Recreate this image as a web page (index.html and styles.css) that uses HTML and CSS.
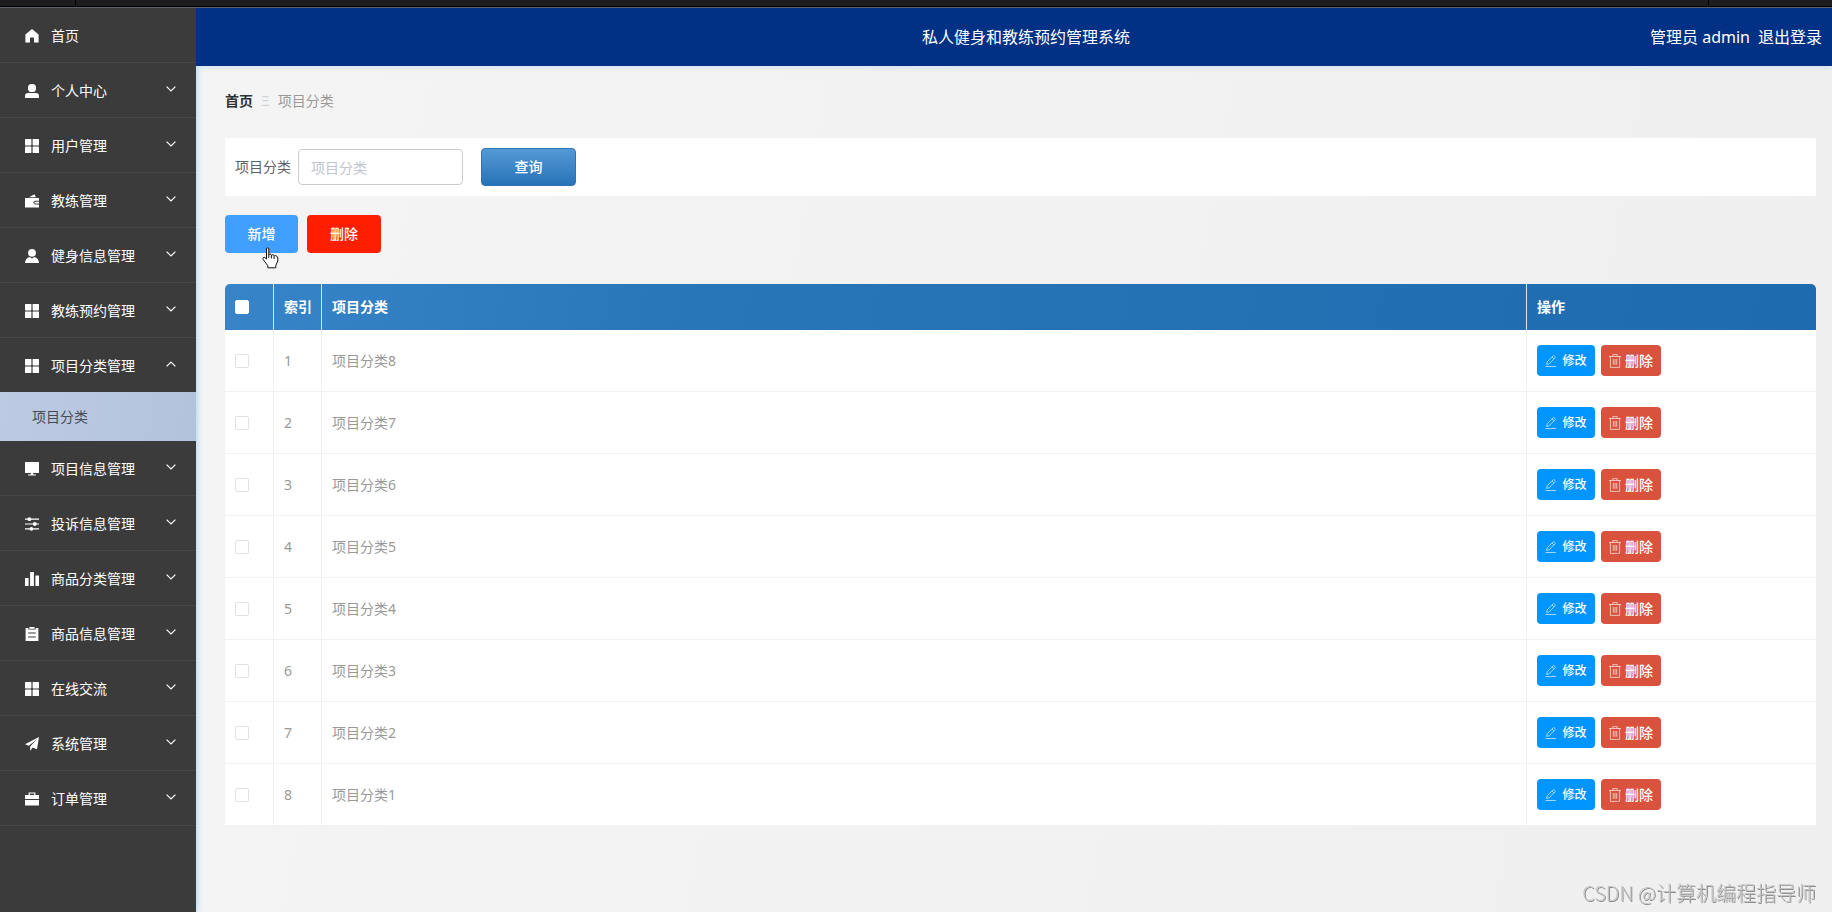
FILE: index.html
```html
<!DOCTYPE html>
<html lang="zh-CN">

<head>
    <meta charset="UTF-8">
    <meta name="viewport" content="width=device-width, initial-scale=1.0">
    <title>私人健身和教练预约管理系统</title>
    <link rel="stylesheet" href="styles.css">
</head>

<body>
    <!-- icon set -->
    <svg class="sprite" xmlns="http://www.w3.org/2000/svg" aria-hidden="true">
        <symbol id="i-home" viewBox="0 0 14 14">
            <path d="M7 0 13.6 5.6V13.5H9V9.2Q9 8.4 8.2 8.4H5.8Q5 8.4 5 9.2V13.5H.4V5.6Z" />
        </symbol>
        <symbol id="i-user" viewBox="0 0 14 14">
            <rect x="3" y="0" width="8" height="8" rx="3.6" />
            <path d="M0 14V12.2Q0 9 3.2 9H10.8Q14 9 14 12.2V14Z" />
        </symbol>
        <symbol id="i-grid" viewBox="0 0 14 14">
            <rect width="6.4" height="6.4" rx=".6" />
            <rect x="7.6" width="6.4" height="6.4" rx=".6" />
            <rect y="7.6" width="6.4" height="6.4" rx=".6" />
            <rect x="7.6" y="7.6" width="6.4" height="6.4" rx=".6" />
        </symbol>
        <symbol id="i-wallet" viewBox="0 0 14 14">
            <path d="M4 3.2 9 .6Q9.6.3 9.9.9L11 3.2Z" />
            <path fill-rule="evenodd" d="M0 4H14V6.8H10.2A1.8 1.8 0 0 0 10.2 10.4H14V13.6H0ZM10.3 7.8H14V9.5H10.3A.85.85 0 0 1 10.3 7.8Z" />
        </symbol>
        <symbol id="i-coach" viewBox="0 0 14 14">
            <circle cx="7" cy="3.9" r="3.9" />
            <path d="M0 14Q.4 8.8 4.6 7.9L7 9.6 9.4 7.9Q13.6 8.8 14 14Z" />
        </symbol>
        <symbol id="i-screen" viewBox="0 0 14 14">
            <path d="M.6 0H13.4Q14 0 14 .6V10.4Q14 11 13.4 11H.6Q0 11 0 10.4V.6Q0 0 .6 0ZM5.8 11H8.2V12.4H11V13.6H3V12.4H5.8Z" />
        </symbol>
        <symbol id="i-sliders" viewBox="0 0 14 14">
            <path d="M0 1.6H14V2.8H0ZM0 6.4H14V7.6H0ZM0 11.2H14V12.4H0Z" />
            <circle cx="4.4" cy="2.2" r="1.9" />
            <circle cx="9.8" cy="7" r="1.9" />
            <circle cx="6.4" cy="11.8" r="1.9" />
        </symbol>
        <symbol id="i-chart" viewBox="0 0 14 14">
            <path d="M0 6H3.6V14H0ZM5.1 0H8.9V14H5.1ZM10.4 3.4H14V14H10.4Z" />
        </symbol>
        <symbol id="i-clipboard" viewBox="0 0 14 14">
            <path fill-rule="evenodd" d="M.6 1H3.4V2.6H10.6V1H13.4V14H.6ZM3.2 5.4V6.4H10.8V5.4ZM3.2 9.6V10.6H10.8V9.6Z" />
            <path d="M4.4 0H9.6V1.8H4.4Z" />
        </symbol>
        <symbol id="i-plane" viewBox="0 0 14 14">
            <path d="M14 0 12 12.2 7.6 10.4 5.2 14V9.4L11.6 2.6 3.8 8.8 0 7.2Z" />
        </symbol>
        <symbol id="i-case" viewBox="0 0 14 14">
            <path fill-rule="evenodd" d="M0 3H3.6V.4H10.4V3H14V7H0ZM4.8 1.5V3H9.2V1.5ZM0 8H14V13.6H0Z" />
        </symbol>
        <symbol id="i-arrow" viewBox="0 0 10 6">
            <path d="M.6.6 5 5 9.4.6" fill="none" stroke="currentColor" stroke-width="1.2" />
        </symbol>
        <symbol id="i-edit" viewBox="0 0 12 12">
            <path d="M.5 11.5H11M1.6 9.4 2.2 6.8 8 .9Q8.6.4 9.2.9L10 1.7Q10.5 2.3 10 2.9L4.2 8.8ZM7 2 8.9 3.9" fill="none" stroke="currentColor" stroke-width=".8" />
        </symbol>
        <symbol id="i-trash" viewBox="0 0 12 14">
            <path d="M0 2.5H12M3.8 2.5V.6H8.2V2.5M1.4 2.5V13.4H10.6V2.5M4.3 5V10.8M6 5V10.8M7.7 5V10.8" fill="none" stroke="currentColor" stroke-width=".8" />
        </symbol>
    </svg>

    <div class="strip">
        <span class="strip-tab"></span>
        <span class="strip-end"></span>
    </div>

    <div class="app">
        <nav class="sidebar">
            <a class="menu-item" href="#"><svg class="menu-icon"><use href="#i-home" /></svg>首页</a>
            <button class="menu-item" type="button" aria-expanded="false"><svg class="menu-icon"><use href="#i-user" /></svg>个人中心<svg class="menu-arrow"><use href="#i-arrow" /></svg></button>
            <button class="menu-item" type="button" aria-expanded="false"><svg class="menu-icon"><use href="#i-grid" /></svg>用户管理<svg class="menu-arrow"><use href="#i-arrow" /></svg></button>
            <button class="menu-item" type="button" aria-expanded="false"><svg class="menu-icon"><use href="#i-wallet" /></svg>教练管理<svg class="menu-arrow"><use href="#i-arrow" /></svg></button>
            <button class="menu-item" type="button" aria-expanded="false"><svg class="menu-icon"><use href="#i-coach" /></svg>健身信息管理<svg class="menu-arrow"><use href="#i-arrow" /></svg></button>
            <button class="menu-item" type="button" aria-expanded="false"><svg class="menu-icon"><use href="#i-grid" /></svg>教练预约管理<svg class="menu-arrow"><use href="#i-arrow" /></svg></button>
            <button class="menu-item menu-item--open" type="button" aria-expanded="true"><svg class="menu-icon"><use href="#i-grid" /></svg>项目分类管理<svg class="menu-arrow"><use href="#i-arrow" /></svg></button>
            <a class="submenu-item" href="#">项目分类</a>
            <button class="menu-item" type="button" aria-expanded="false"><svg class="menu-icon"><use href="#i-screen" /></svg>项目信息管理<svg class="menu-arrow"><use href="#i-arrow" /></svg></button>
            <button class="menu-item" type="button" aria-expanded="false"><svg class="menu-icon"><use href="#i-sliders" /></svg>投诉信息管理<svg class="menu-arrow"><use href="#i-arrow" /></svg></button>
            <button class="menu-item" type="button" aria-expanded="false"><svg class="menu-icon"><use href="#i-chart" /></svg>商品分类管理<svg class="menu-arrow"><use href="#i-arrow" /></svg></button>
            <button class="menu-item" type="button" aria-expanded="false"><svg class="menu-icon"><use href="#i-clipboard" /></svg>商品信息管理<svg class="menu-arrow"><use href="#i-arrow" /></svg></button>
            <button class="menu-item" type="button" aria-expanded="false"><svg class="menu-icon"><use href="#i-grid" /></svg>在线交流<svg class="menu-arrow"><use href="#i-arrow" /></svg></button>
            <button class="menu-item" type="button" aria-expanded="false"><svg class="menu-icon"><use href="#i-plane" /></svg>系统管理<svg class="menu-arrow"><use href="#i-arrow" /></svg></button>
            <button class="menu-item" type="button" aria-expanded="false"><svg class="menu-icon"><use href="#i-case" /></svg>订单管理<svg class="menu-arrow"><use href="#i-arrow" /></svg></button>
        </nav>

        <div class="page">
            <header class="header">
                <h1 class="header-title">私人健身和教练预约管理系统</h1>
                <div class="header-user">
                    <span>管理员 admin</span>
                    <a class="header-link" href="#">退出登录</a>
                </div>
            </header>

            <main class="content">
                <div class="breadcrumb">
                    <a class="breadcrumb-home" href="#">首页</a>
                    <span class="breadcrumb-sep">Ξ</span>
                    <span>项目分类</span>
                </div>

                <form class="search">
                    <label class="search-label" for="category">项目分类</label>
                    <input class="search-input" id="category" type="text" placeholder="项目分类">
                    <button class="btn btn--search" type="button">查询</button>
                </form>

                <div class="actions">
                    <button class="btn btn--add" type="button">新增
                        <svg class="cursor" viewBox="0 0 17 22" aria-hidden="true">
                            <path d="M4.5 2Q4.5.8 5.6.8T6.8 2V8Q7.2 6.8 8.2 7T9.4 8.4Q10 7.4 11 7.7T12.1 9.2Q12.6 8.3 13.5 8.6 15.6 9 15.8 11V14L13.8 18.4V20.8H5.8V18.8L1.2 12.4Q.6 11 1.6 10.4T4.5 12Z" fill="#fff" stroke="#111" />
                            <path d="M6.8 8V11M9.4 8.4V11.4M12.1 9.2V12" stroke="#111" />
                        </svg>
                    </button>
                    <button class="btn btn--remove" type="button">删除</button>
                </div>

                <table class="table">
                    <thead>
                        <tr>
                            <th class="col-check"><input class="check" type="checkbox" aria-label="全选"></th>
                            <th class="col-index">索引</th>
                            <th>项目分类</th>
                            <th class="col-ops">操作</th>
                        </tr>
                    </thead>
                    <tbody>
                        <tr>
                            <td><input class="check" type="checkbox" aria-label="选择项目分类8"></td>
                            <td>1</td>
                            <td>项目分类8</td>
                            <td>
                                <div class="ops">
                                    <button class="op op--edit" type="button"><svg class="op-icon"><use href="#i-edit" /></svg>修改</button>
                                    <button class="op op--delete" type="button"><svg class="op-icon"><use href="#i-trash" /></svg>删除</button>
                                </div>
                            </td>
                        </tr>
                        <tr>
                            <td><input class="check" type="checkbox" aria-label="选择项目分类7"></td>
                            <td>2</td>
                            <td>项目分类7</td>
                            <td>
                                <div class="ops">
                                    <button class="op op--edit" type="button"><svg class="op-icon"><use href="#i-edit" /></svg>修改</button>
                                    <button class="op op--delete" type="button"><svg class="op-icon"><use href="#i-trash" /></svg>删除</button>
                                </div>
                            </td>
                        </tr>
                        <tr>
                            <td><input class="check" type="checkbox" aria-label="选择项目分类6"></td>
                            <td>3</td>
                            <td>项目分类6</td>
                            <td>
                                <div class="ops">
                                    <button class="op op--edit" type="button"><svg class="op-icon"><use href="#i-edit" /></svg>修改</button>
                                    <button class="op op--delete" type="button"><svg class="op-icon"><use href="#i-trash" /></svg>删除</button>
                                </div>
                            </td>
                        </tr>
                        <tr>
                            <td><input class="check" type="checkbox" aria-label="选择项目分类5"></td>
                            <td>4</td>
                            <td>项目分类5</td>
                            <td>
                                <div class="ops">
                                    <button class="op op--edit" type="button"><svg class="op-icon"><use href="#i-edit" /></svg>修改</button>
                                    <button class="op op--delete" type="button"><svg class="op-icon"><use href="#i-trash" /></svg>删除</button>
                                </div>
                            </td>
                        </tr>
                        <tr>
                            <td><input class="check" type="checkbox" aria-label="选择项目分类4"></td>
                            <td>5</td>
                            <td>项目分类4</td>
                            <td>
                                <div class="ops">
                                    <button class="op op--edit" type="button"><svg class="op-icon"><use href="#i-edit" /></svg>修改</button>
                                    <button class="op op--delete" type="button"><svg class="op-icon"><use href="#i-trash" /></svg>删除</button>
                                </div>
                            </td>
                        </tr>
                        <tr>
                            <td><input class="check" type="checkbox" aria-label="选择项目分类3"></td>
                            <td>6</td>
                            <td>项目分类3</td>
                            <td>
                                <div class="ops">
                                    <button class="op op--edit" type="button"><svg class="op-icon"><use href="#i-edit" /></svg>修改</button>
                                    <button class="op op--delete" type="button"><svg class="op-icon"><use href="#i-trash" /></svg>删除</button>
                                </div>
                            </td>
                        </tr>
                        <tr>
                            <td><input class="check" type="checkbox" aria-label="选择项目分类2"></td>
                            <td>7</td>
                            <td>项目分类2</td>
                            <td>
                                <div class="ops">
                                    <button class="op op--edit" type="button"><svg class="op-icon"><use href="#i-edit" /></svg>修改</button>
                                    <button class="op op--delete" type="button"><svg class="op-icon"><use href="#i-trash" /></svg>删除</button>
                                </div>
                            </td>
                        </tr>
                        <tr>
                            <td><input class="check" type="checkbox" aria-label="选择项目分类1"></td>
                            <td>8</td>
                            <td>项目分类1</td>
                            <td>
                                <div class="ops">
                                    <button class="op op--edit" type="button"><svg class="op-icon"><use href="#i-edit" /></svg>修改</button>
                                    <button class="op op--delete" type="button"><svg class="op-icon"><use href="#i-trash" /></svg>删除</button>
                                </div>
                            </td>
                        </tr>
                    </tbody>
                </table>
            </main>
        </div>
    </div>

    <div class="watermark">CSDN @计算机编程指导师</div>
</body>

</html>
```

FILE: styles.css
```css
/*
MAIN COLOR: #003185
SIDEBAR: #3b3b3b
FONT SIZES (px): 12 / 14 / 16 / 20
*/

* {
    margin: 0;
    padding: 0;
    box-sizing: border-box;
}

body {
    min-height: 100vh;
    display: flex;
    flex-direction: column;
    font-family: "Noto Sans", "Noto Sans CJK SC", sans-serif;
    font-size: 14px;
    line-height: 20px;
    color: #999;
    background-color: #f2f2f2;
}

button,
input {
    font: inherit;
}

button {
    border: none;
    cursor: pointer;
}

a {
    color: inherit;
    text-decoration: none;
}

svg {
    fill: currentColor;
}

.sprite {
    position: absolute;
    width: 0;
    height: 0;
}

/* window edge above the page */
.strip {
    height: 8px;
    display: flex;
    justify-content: space-between;
    background-color: #1d1d1d;
    border-bottom: 1px solid #5a6068;
    box-shadow: inset 0 -1px #000;
}

.strip-tab {
    width: 76px;
    border-right: 1px solid #000;
}

.strip-end {
    width: 124px;
    border-left: 1px solid #000;
}

.app {
    flex: 1;
    display: flex;
}

/* sidebar */
.sidebar {
    width: 196px;
    flex-shrink: 0;
    position: relative;
    z-index: 1;
    background-color: #3b3b3b;
    box-shadow: 1px 0 6px #a8d4f5;
    clip-path: inset(0 -12px 0 0);
}

.menu-item {
    width: 100%;
    height: 55px;
    padding: 2px 20px 0 25px;
    display: flex;
    align-items: center;
    color: #fff;
    background: none;
    border-bottom: 1px solid #474747;
    text-align: left;
}

.menu-item--open {
    height: 54px;
    border-bottom: none;
}

.menu-icon {
    width: 14px;
    height: 14px;
    margin-right: 12px;
}

.menu-arrow {
    width: 10px;
    height: 6px;
    margin: 0 0 4px auto;
}

.menu-item--open .menu-arrow {
    transform: rotate(180deg);
}

.submenu-item {
    height: 49px;
    padding-left: 32px;
    display: flex;
    align-items: center;
    color: #444b57;
    background: linear-gradient(100deg, #bccbe2, #b3c3dc);
}

/* header */
.page {
    flex: 1;
    min-width: 0;
    background: linear-gradient(100deg, #f4f4f4, #efefef);
}

.header {
    height: 58px;
    padding: 0 10px 0 34px;
    position: relative;
    z-index: 2;
    display: grid;
    grid-template-columns: 1fr auto 1fr;
    align-items: center;
    font-size: 16px;
    color: #fff;
    background-color: #003185;
    box-shadow: 0 1px 6px #c9dff0;
    clip-path: inset(0 0 -10px 0);
}

.header-title {
    grid-column: 2;
    font-size: 16px;
    font-weight: 400;
}

.header-user {
    display: flex;
    justify-content: flex-end;
    gap: 8px;
}

/* content */
.content {
    padding: 25px 16px 24px 29px;
}

.breadcrumb {
    display: flex;
    gap: 8px;
}

.breadcrumb-home {
    font-weight: 700;
    color: #303133;
}

.breadcrumb-sep {
    color: #d0d3d8;
}

.search {
    margin-top: 27px;
    padding: 10px;
    display: flex;
    align-items: center;
    background-color: #fff;
    border-radius: 2px;
}

.search-label {
    margin-right: 7px;
    color: #606266;
}

.search-input {
    width: 165px;
    height: 36px;
    margin-right: 18px;
    padding: 0 12px;
    border: 1px solid #ccc;
    border-radius: 4px;
    outline: none;
    color: #606266;
    background-color: #fff;
}

.search-input::placeholder {
    color: #c0c4cc;
}

.btn {
    height: 38px;
    border-radius: 4px;
    font-weight: 500;
    color: #fff;
}

.btn--search {
    width: 95px;
    border: 1px solid #2e74b5;
    background: linear-gradient(#5499d6, #2873b8);
}

.actions {
    margin: 19px 0 31px;
    display: flex;
    gap: 9px;
}

.btn--add {
    width: 73px;
    position: relative;
    background-color: #409eff;
}

.btn--remove {
    width: 74px;
    background-color: #ff1f00;
}

/* hand pointer over the add button */
.cursor {
    position: absolute;
    left: 37px;
    top: 32px;
    z-index: 1;
    width: 17px;
    height: 22px;
    fill: none;
}

/* table */
.table {
    width: 100%;
    table-layout: fixed;
    border-spacing: 0;
    border-radius: 5px 5px 0 0;
    overflow: hidden;
    background-color: #fff;
}

.table th,
.table td {
    padding: 0 10px;
    text-align: left;
    border-right: 1px solid #f2f2f2;
}

.table th:last-child,
.table td:last-child {
    border-right: none;
}

.table thead tr {
    background: linear-gradient(100deg, #3785c8, #2875b7 30%, #1f6bb0);
}

.table th {
    height: 46px;
    white-space: nowrap;
    color: #fff;
    border-right-color: #d5e6f3;
}

.table td {
    height: 62px;
    border-bottom: 1px solid #f2f2f2;
}

.col-check {
    width: 49px;
}

.col-index {
    width: 48px;
}

.col-ops {
    width: 289px;
}

.check {
    display: block;
    width: 14px;
    height: 14px;
    appearance: none;
    background-color: #fff;
    border: 1px solid #e2e2e2;
    border-radius: 2px;
}

.table th .check {
    border-color: #fff;
}

.ops {
    display: flex;
    align-items: center;
    gap: 6px;
}

.op {
    height: 31px;
    display: flex;
    align-items: center;
    justify-content: center;
    border-radius: 4px;
    font-weight: 500;
    color: #fff;
}

.op--edit {
    width: 58px;
    gap: 5px;
    font-size: 12px;
    background-color: #0095ff;
}

.op--delete {
    width: 60px;
    gap: 4px;
    background-color: #d9523d;
}

.op-icon {
    width: 12px;
    height: 14px;
    opacity: 0.8;
}

.watermark {
    position: fixed;
    right: 16px;
    bottom: 6px;
    font-family: "Noto Sans CJK SC", sans-serif;
    font-size: 20px;
    font-weight: 300;
    line-height: 26px;
    color: #c4c4c4;
    text-shadow: 1px 1px #909090;
}
```
